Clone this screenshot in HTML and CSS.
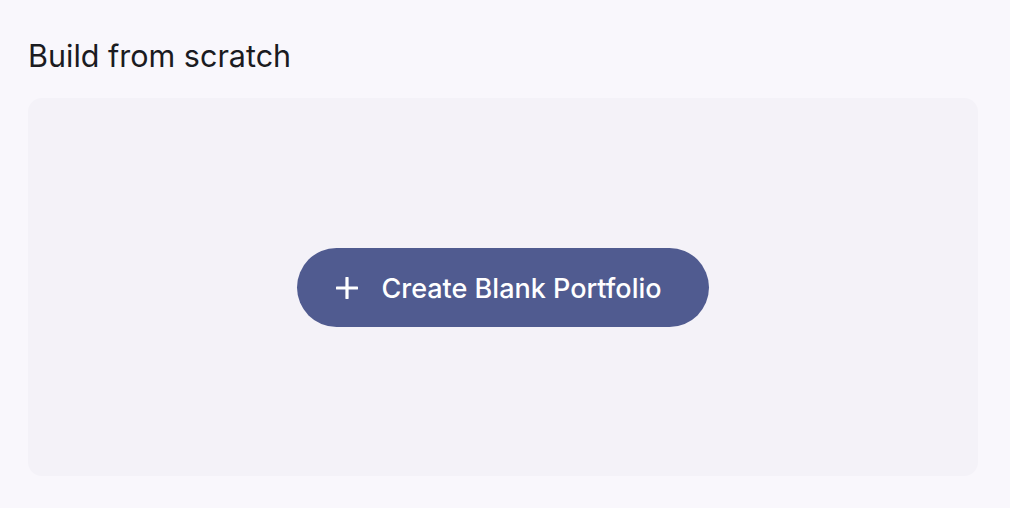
FILE: index.html
```html
<!DOCTYPE html>
<html lang="en">
<head>
    <meta charset="UTF-8">
    <meta name="viewport" content="width=device-width, initial-scale=1.0">
    <title>Build from scratch</title>
    <link rel="stylesheet" href="styles.css">
</head>
<body>

<div class="page">
    <h2 class="section-title">Build from scratch</h2>
    <div class="blank-card">
        <button type="button" class="create-btn">
            <svg class="plus" width="22" height="22" viewBox="0 0 22 22" aria-hidden="true">
                <path d="M11 1v20M1 11h20" stroke="currentColor" stroke-width="3.2" stroke-linecap="round"/>
            </svg>
            <span>Create Blank Portfolio</span>
        </button>
    </div>
</div>

</body>
</html>
```

FILE: styles.css
```css
body {
    font-family: Inter, "Noto Sans", sans-serif;
    background-color: #f9f7fc;
    margin: 0;
    padding: 0;
}
.page {
    padding: 38px 32px 32px 28px;
}
.section-title {
    margin: 0 0 24px 0;
    font-size: 30.5px;
    font-weight: 400;
    line-height: 36px;
    color: #1b1b21;
}
.blank-card {
    height: 378px;
    background-color: #f4f2f8;
    border-radius: 14px;
    display: flex;
    align-items: center;
    justify-content: center;
}
.create-btn {
    display: flex;
    align-items: center;
    gap: 23px;
    height: 79px;
    padding: 2px 47px 0 39px;
    border: none;
    border-radius: 40px;
    background-color: #505b90;
    color: #ffffff;
    font-family: Inter, "Noto Sans", sans-serif;
    font-size: 27px;
    font-weight: 500;
    font-variant-ligatures: none;
    cursor: pointer;
}
.plus {
    flex-shrink: 0;
}
```
